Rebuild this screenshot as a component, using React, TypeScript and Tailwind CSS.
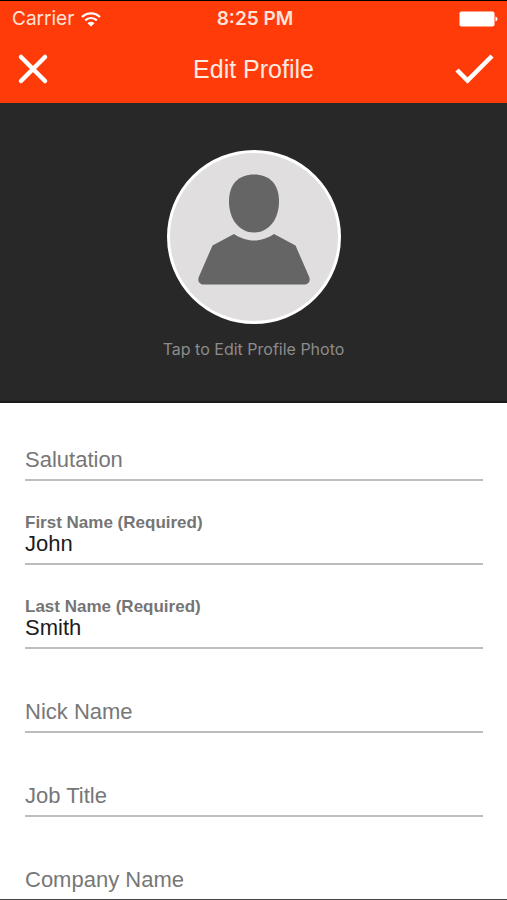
import React, { useState } from "react";

interface ProfileField {
  id: string;
  label: string;
  required?: boolean;
}

const FIELDS: ProfileField[] = [
  { id: "salutation", label: "Salutation" },
  { id: "firstName", label: "First Name", required: true },
  { id: "lastName", label: "Last Name", required: true },
  { id: "nickName", label: "Nick Name" },
  { id: "jobTitle", label: "Job Title" },
  { id: "companyName", label: "Company Name" },
];

const INITIAL_VALUES: Record<string, string> = {
  firstName: "John",
  lastName: "Smith",
};

const StatusBar: React.FC = () => (
  <div className="grid h-9 grid-cols-3 items-center pr-[9px] pl-3 font-['Inter',sans-serif] text-[19px] leading-6 text-[#ffe3d8]">
    <div className="flex items-center gap-[7px]">
      <span>Carrier</span>
      <svg width="20" height="15" viewBox="0 0 20 15" fill="none" aria-hidden="true">
        <path d="M1 5a12.8 12.8 0 0 1 18 0" stroke="#fff" strokeWidth="2.2" />
        <path d="M4.2 8.4a8.2 8.2 0 0 1 11.6 0" stroke="#fff" strokeWidth="2.2" />
        <path d="M10 14.5 6.5 11.2a5 5 0 0 1 7 0Z" fill="#fff" />
      </svg>
    </div>
    <span className="text-center font-semibold">8:25 PM</span>
    <svg className="justify-self-end" width="39" height="16" viewBox="0 0 39 16" aria-hidden="true">
      <rect x="0.5" y="0.5" width="35" height="15" rx="2" fill="#fff" />
      <path d="M36.5 5.5c1.4.6 2 1.5 2 2.5s-.6 1.9-2 2.5Z" fill="#fff" />
    </svg>
  </div>
);

const NavBar: React.FC = () => (
  <div className="flex h-[66px] items-center justify-between px-[13px] pb-[2px]">
    <button type="button" aria-label="Cancel" className="flex w-10 justify-center">
      <svg width="32" height="32" viewBox="0 0 32 32" fill="none" aria-hidden="true">
        <path d="M4 4 28 28M28 4 4 28" stroke="#fff" strokeWidth="4.5" strokeLinecap="round" />
      </svg>
    </button>
    <h1 className="font-['Liberation_Sans',Arial,sans-serif] text-[25px] leading-8 text-[#ffe9e0]">
      Edit Profile
    </h1>
    <button type="button" aria-label="Save" className="flex w-10 justify-end">
      <svg width="40" height="32" viewBox="0 0 40 32" fill="none" aria-hidden="true">
        <path d="m3 17 10.500 10.500L38 3" stroke="#fff" strokeWidth="4.5" />
      </svg>
    </button>
  </div>
);

const PhotoPicker: React.FC = () => (
  <section className="flex justify-center border-b-2 border-[#1a1a1a] bg-[#282828] pt-[47px] pb-10">
    <button type="button" className="flex flex-col items-center gap-[13px]">
      <svg width="174" height="174" viewBox="0 0 174 174" aria-hidden="true">
        <circle cx="87" cy="87" r="85.5" fill="#e0dede" stroke="#fff" strokeWidth="3" />
        <path
          d="M87 24.5c15 0 25 9 25 27C112 69 102 82.5 87 82.5S62 69 62 51.5c0-18 10-27 25-27Z"
          fill="#656565"
        />
        <path
          d="M67 84c6 4 13 6.5 20 6.5s14-2.5 20-6.5l21.5 11.5 13.5 31c2 4.5-.5 8-5 8H37c-4.5 0-7-3.5-5-8l13.5-31Z"
          fill="#656565"
        />
      </svg>
      <span className="font-['Inter',sans-serif] text-[16px] leading-6 text-[#8c8c8c]">
        Tap to Edit Profile Photo
      </span>
    </button>
  </section>
);

interface FieldRowProps {
  field: ProfileField;
  value: string;
  onChange: (value: string) => void;
}

// The caption only shows above a filled field, an empty one uses its placeholder.
const FieldRow: React.FC<FieldRowProps> = ({ field, value, onChange }) => (
  <div className="flex min-h-[52px] shrink-0 flex-col justify-end border-b-2 border-[#bdbdbd] pb-[7px]">
    {value && (
      <label htmlFor={field.id} className="text-[17px] leading-[19px] font-bold text-[#757575]">
        {field.label}
        {field.required && " (Required)"}
      </label>
    )}
    <input
      id={field.id}
      type="text"
      value={value}
      placeholder={field.label}
      aria-label={value ? undefined : field.label}
      required={field.required}
      onChange={(e) => onChange(e.target.value)}
      className="h-6 w-full bg-transparent text-[22px] leading-6 text-[#1c1c1c] outline-none placeholder:text-[#777777]"
    />
  </div>
);

const App: React.FC = () => {
  const [values, setValues] = useState<Record<string, string>>(INITIAL_VALUES);

  return (
    <div className="flex h-screen flex-col overflow-hidden border-t border-b border-t-black border-b-[#444444] bg-white font-['Liberation_Sans',Arial,sans-serif]">
      <header className="shrink-0 bg-[#ff3b0a]">
        <StatusBar />
        <NavBar />
      </header>
      <main className="flex min-h-0 flex-1 flex-col">
        <PhotoPicker />
        <form className="flex min-h-0 flex-1 flex-col gap-8 overflow-hidden pt-[26px] pr-6 pl-[25px]">
          {FIELDS.map((field) => (
            <FieldRow
              key={field.id}
              field={field}
              value={values[field.id] ?? ""}
              onChange={(value) => setValues({ ...values, [field.id]: value })}
            />
          ))}
        </form>
      </main>
    </div>
  );
};

export default App;
